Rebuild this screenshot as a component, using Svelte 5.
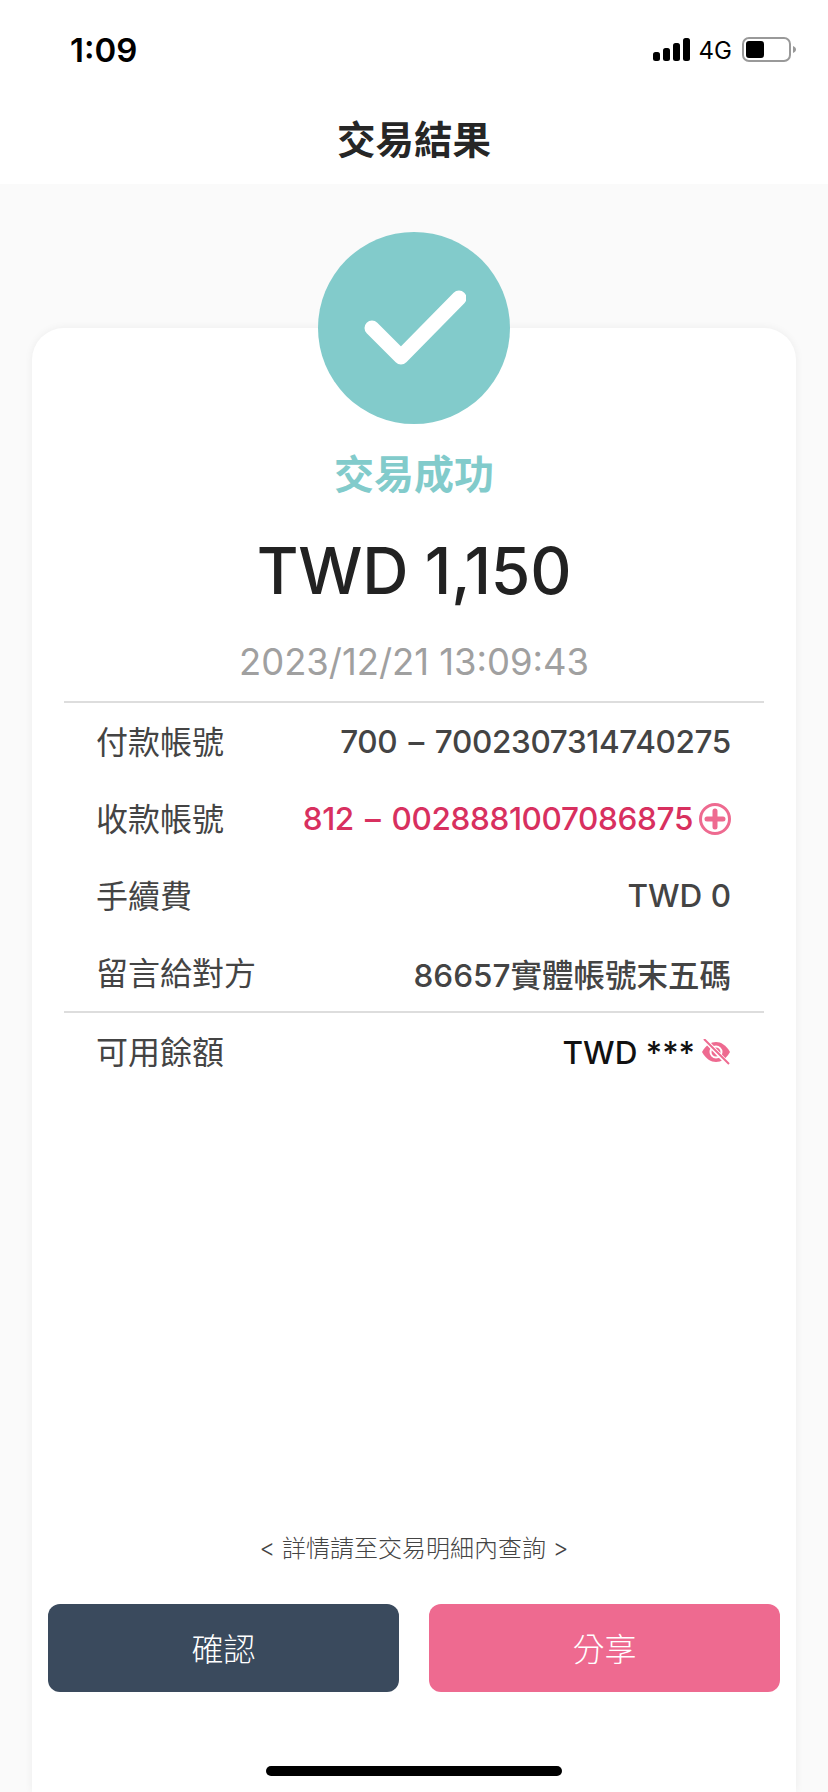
<script>
  const rows = [
    { label: '付款帳號', value: '700 – 7002307314740275', acct: true },
    { label: '收款帳號', value: '812 – 0028881007086875', acct: true, accent: true },
    { label: '手續費', value: 'TWD 0' },
    { label: '留言給對方', value: '86657實體帳號末五碼' },
  ];
</script>

<div class="page">
  <div class="status">
    <span class="time">1:09</span>
    <div class="indicators">
      <svg class="signal" width="38" height="24" viewBox="0 0 38 24" fill="#000">
        <rect x="0" y="14" width="7" height="9" rx="2.5" />
        <rect x="10" y="10" width="7" height="13" rx="2.5" />
        <rect x="20" y="5" width="7" height="18" rx="2.5" />
        <rect x="30" y="0" width="7" height="23" rx="2.5" />
      </svg>
      <span class="net">4G</span>
      <svg class="battery" width="54" height="26" viewBox="0 0 54 26">
        <rect x="1" y="1" width="47" height="23" rx="6" fill="none" stroke="#999" stroke-width="2" />
        <rect x="4" y="4" width="18" height="17" rx="3" fill="#000" />
        <path d="M51 9c2 1 3 2 3 3.500s-1 2.500-3 3.500z" fill="#999" />
      </svg>
    </div>
  </div>

  <header class="title"><h1>交易結果</h1></header>

  <main class="card">
    <div class="badge">
      <svg width="104" height="80" viewBox="0 0 104 80" fill="none">
        <path d="M10 40 L39 69 L97 10" stroke="#fff" stroke-width="15" stroke-linecap="round" stroke-linejoin="round" />
      </svg>
    </div>
    <p class="result">交易成功</p>
    <p class="amount">TWD 1,150</p>
    <p class="date">2023/12/21 13:09:43</p>

    <div class="details">
      {#each rows as r}
        <div class="row">
          <span class="label">{r.label}</span>
          <span class="value" class:acct={r.acct} class:accent={r.accent}>{r.value}</span>
          {#if r.accent}
            <svg class="icon" width="32" height="32" viewBox="0 0 32 32" fill="none" stroke="#ee6a90">
              <circle cx="16" cy="16" r="14.500" stroke-width="3" />
              <path d="M8 16h16M16 8v16" stroke-width="5" stroke-linecap="round" />
            </svg>
          {/if}
        </div>
      {/each}
    </div>

    <div class="row balance">
      <span class="label">可用餘額</span>
      <span class="value dark">TWD ***</span>
      <svg class="icon" width="30" height="26" viewBox="0 0 30 26">
        <path d="M1 13C5 6 10 3 15 3s10 3 14 10c-4 7-9 10-14 10S5 20 1 13z" fill="#ee6a90" />
        <circle cx="15" cy="13" r="5.500" fill="none" stroke="#fff" stroke-width="2" />
        <path d="M4 1l23 24" stroke="#fff" stroke-width="4.500" />
        <path d="M3 0l25 25" stroke="#ee6a90" stroke-width="2" />
      </svg>
    </div>

    <p class="note">&lt; 詳情請至交易明細內查詢 &gt;</p>
    <div class="actions">
      <button class="confirm">確認</button>
      <button class="share">分享</button>
    </div>
  </main>

  <div class="home"></div>
</div>

<style>
  :global(body) {
    margin: 0;
    background: #fafafa;
  }

  .page {
    position: relative;
    height: 1792px;
    overflow: hidden;
    display: flex;
    flex-direction: column;
    background: #fafafa;
    font-family: Inter, "Noto Sans CJK TC", sans-serif;
    color: #444;
  }

  p, h1 {
    margin: 0;
  }

  .status {
    height: 100px;
    box-sizing: border-box;
    background: #fff;
    display: flex;
    justify-content: space-between;
    align-items: center;
    padding: 0 32px 0 70px;
    color: #000;
  }

  .time {
    font-size: 33px;
    font-weight: 600;
  }

  .indicators {
    display: flex;
    align-items: center;
    gap: 6px;
  }

  .signal {
    margin-right: 2px;
  }

  .net {
    font-size: 24px;
    margin-right: 4px;
  }

  .title {
    height: 84px;
    background: #fff;
    display: flex;
    justify-content: center;
    padding-top: 16px;
    box-sizing: border-box;
  }

  h1 {
    font-size: 38.500px;
    font-weight: 700;
    line-height: 48px;
    color: #262626;
  }

  .card {
    flex: 1;
    margin: 144px 32px 0;
    padding: 0 16px;
    background: #fff;
    border-radius: 32px 32px 0 0;
    box-shadow: 0 0 8px rgba(0, 0, 0, 0.06);
    display: flex;
    flex-direction: column;
    align-items: center;
  }

  .badge {
    width: 192px;
    height: 192px;
    margin-top: -96px;
    border-radius: 50%;
    background: #82cbcb;
    display: flex;
    align-items: center;
    justify-content: center;
  }

  .result {
    margin-top: 27px;
    font-size: 40px;
    line-height: 48px;
    font-weight: 700;
    color: #82cbcb;
  }

  .amount {
    margin-top: 30px;
    font-size: 64px;
    line-height: 84px;
    font-weight: 550;
    letter-spacing: -0.3px;
    color: #222;
  }

  .date {
    margin-top: 26px;
    font-size: 36.400px;
    line-height: 46px;
    color: #a0a0a0;
  }

  .details {
    align-self: stretch;
    margin: 16px 16px 0;
    padding: 0 33px;
    border-top: 2px solid #ddd;
    border-bottom: 2px solid #ddd;
  }

  .row {
    height: 77px;
    display: flex;
    align-items: center;
    gap: 6px;
    font-size: 32px;
  }

  .label {
    margin-right: auto;
    margin-bottom: 4px;
    margin-left: -1px;
  }

  .value {
    font-size: 31.500px;
    font-weight: 500;
  }

  .acct {
    letter-spacing: -0.35px;
    word-spacing: 3px;
  }

  .accent {
    color: #d8305f;
  }

  .dark {
    color: #111;
  }

  .balance {
    align-self: stretch;
    padding: 0 49px;
    height: 78px;
  }

  .note {
    margin-top: auto;
    font-size: 24px;
    line-height: 34px;
    font-weight: 300;
    color: #444;
  }

  .actions {
    align-self: stretch;
    display: grid;
    grid-template-columns: 1fr 1fr;
    gap: 30px;
    margin: 38px 0 100px;
  }

  button {
    height: 88px;
    padding: 0 0 2px;
    border: 0;
    border-radius: 12px;
    font: inherit;
    font-size: 32px;
    font-weight: 300;
    color: #fff;
  }

  .confirm {
    background: #3a4a5d;
  }

  .share {
    background: #ee6a90;
  }

  .home {
    position: absolute;
    left: 266px;
    bottom: 16px;
    width: 296px;
    height: 10px;
    border-radius: 5px;
    background: #000;
  }
</style>
